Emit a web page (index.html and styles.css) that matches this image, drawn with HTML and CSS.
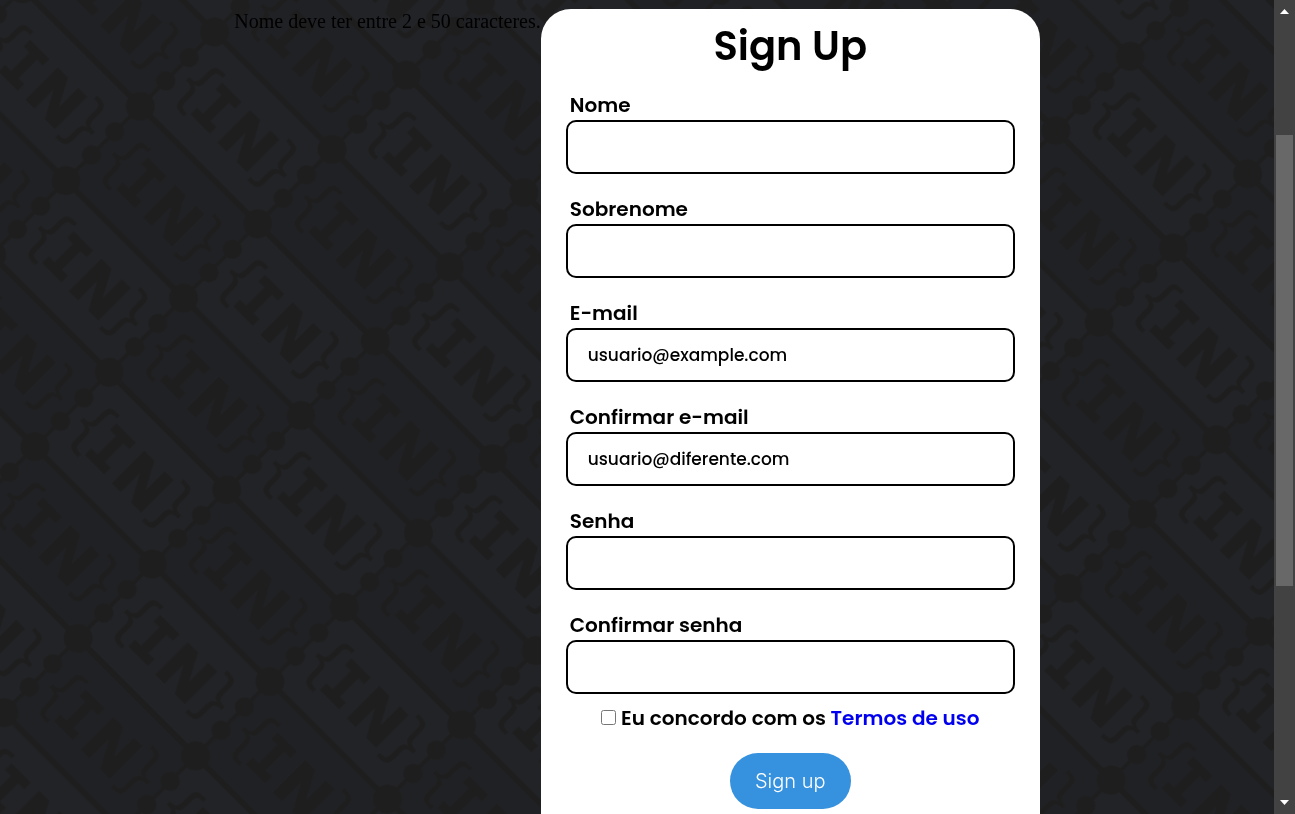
FILE: index.html
```
<!DOCTYPE html>
<html lang="pt-BR">
<head>
<meta charset="utf-8">
<title>Sign Up</title>
<link rel="stylesheet" href="styles.css">
</head>
<body>
<svg class="backdrop" aria-hidden="true">
  <defs>
    <g id="mark" text-anchor="middle">
      <text class="brace" x="-57" y="19">{</text>
      <text class="slab" x="-28" y="22">I</text>
      <text class="letter" x="18" y="23">N</text>
      <text class="brace" x="57" y="19">}</text>
    </g>
    <g id="chain">
      <path class="rail" d="M0 0H166"/>
      <path class="link" d="M0 0V105"/>
      <circle r="14.4"/>
      <circle cy="36" r="9.8"/>
      <circle cy="69" r="9.8"/>
      <circle cy="105" r="14.4"/>
      <circle cx="166.15" r="14.4"/>
    </g>
    <pattern id="weave" width="332.3" height="210.1" patternUnits="userSpaceOnUse" patternTransform="translate(140.3 106.3) rotate(45)">
      <rect class="tile" width="333" height="211"/>
      <rect class="tile-light" x="166.15" width="166.15" height="105.05"/>
      <rect class="tile-light" y="105.05" width="166.15" height="105.05"/>
      <use class="dim" href="#mark" x="83" y="52.5"/>
      <use href="#mark" x="249.2" y="52.5"/>
      <use href="#mark" x="83" y="157.5"/>
      <use class="dim" href="#mark" x="249.2" y="157.5"/>
      <use href="#chain"/>
      <use href="#chain" x="166.15"/>
      <use href="#chain" y="105.05"/>
      <use href="#chain" x="166.15" y="105.05"/>
      <use href="#chain" y="210.1"/>
      <use href="#chain" x="166.15" y="210.1"/>
      <use href="#chain" x="332.3"/>
      <use href="#chain" x="332.3" y="105.05"/>
    </pattern>
  </defs>
  <rect width="100%" height="100%" fill="url(#weave)"/>
</svg>
<div class="page">
  <main class="content">
    <p class="error">Nome deve ter entre 2 e 50 caracteres.</p>
    <form class="card">
      <h1 class="title">Sign Up</h1>
      <div class="field"><label for="nome">Nome</label><input id="nome" type="text"></div>
      <div class="field"><label for="sobrenome">Sobrenome</label><input id="sobrenome" type="text"></div>
      <div class="field"><label for="email">E-mail</label><input id="email" type="email" value="usuario@example.com"></div>
      <div class="field"><label for="email2">Confirmar e-mail</label><input id="email2" type="email" value="usuario@diferente.com"></div>
      <div class="field"><label for="senha">Senha</label><input id="senha" type="password"></div>
      <div class="field"><label for="senha2">Confirmar senha</label><input id="senha2" type="password"></div>
      <div class="terms">
        <input id="termos" type="checkbox">
        <label for="termos">Eu concordo com os <a href="#">Termos de uso</a></label>
      </div>
      <button class="submit" type="submit">Sign up</button>
    </form>
  </main>
  <div class="scrollbar" aria-hidden="true">
    <svg class="arrow" viewBox="0 0 9 5"><path d="M4.5 0L9 5H0z"/></svg>
    <div class="track"><div class="thumb"></div></div>
    <svg class="arrow" viewBox="0 0 9 5"><path d="M0 0H9L4.5 5z"/></svg>
  </div>
</div>
</body>
</html>
```
FILE: styles.css
```
* { box-sizing: border-box; }
body { margin: 0; background: #202125; color: #000; }

.backdrop { position: fixed; inset: 0; width: 100%; height: 100%; z-index: -1; fill: #1e1e1e; }
.brace { font: 63px "DejaVu Sans", sans-serif; }
.slab { font: bold 59px "DejaVu Sans Mono", monospace; stroke: #1e1e1e; stroke-width: 2px; }
.letter { font: bold 61px "DejaVu Sans", sans-serif; stroke: #1e1e1e; stroke-width: 2px; }
.rail { stroke: #1e1e1e; stroke-width: 6px; }
.link { stroke: #1e1e1e; stroke-width: 4px; }
.tile { fill: #202125; }
.tile-light { fill: #222327; }
.dim { opacity: .9; }

.page { display: grid; grid-template-columns: 1fr 21px; height: 100vh; overflow: hidden; }
.content { display: flex; justify-content: center; padding-top: 9px; overflow: hidden; }
.error { margin: 0; font: 20px/24px "Liberation Serif", serif; }
.card {
  display: flex; flex-direction: column; align-items: center;
  width: 499px; min-height: calc(100vh + 30px); padding: 7px 25px 25px;
  background: #fff; border-radius: 30px;
  font-family: Poppins, Inter, sans-serif; font-weight: 500;
}
.title { margin: 0 0 14px; font-size: 40px; line-height: 60px; font-weight: 600; }
.field { display: flex; flex-direction: column; width: 100%; margin-bottom: 20px; }
.field label { padding-left: 4px; font-size: 20px; line-height: 30px; }
.field input {
  width: 100%; height: 54px; padding: 0 20px;
  border: 2px solid #000; border-radius: 10px; background: #fff; color: #000;
  font-family: inherit; font-size: 17px; font-weight: 500;
}
.field label, .terms { font-weight: 600; }
.terms { display: flex; align-items: center; gap: 5px; margin: -11px 0 20px; font-size: 20px; line-height: 30px; }
.terms input { width: 15px; height: 15px; margin: 0 0 2px; }
.terms a { color: #00e; text-decoration: none; }
.submit {
  padding: 13px 25px; border: 0; border-radius: 28px; background: #3692de; color: #fff;
  font-family: Inter, sans-serif; font-size: 20px; line-height: 30px; font-weight: 300;
}

.scrollbar { display: flex; flex-direction: column; align-items: center; justify-content: space-between; padding: 9px 2px; background: #424242; }
.arrow { width: 9px; height: 5px; fill: #fff; }
.track { flex: 1; width: 100%; padding: 121px 0 214px; }
.thumb { height: 100%; background: #686868; }
```
